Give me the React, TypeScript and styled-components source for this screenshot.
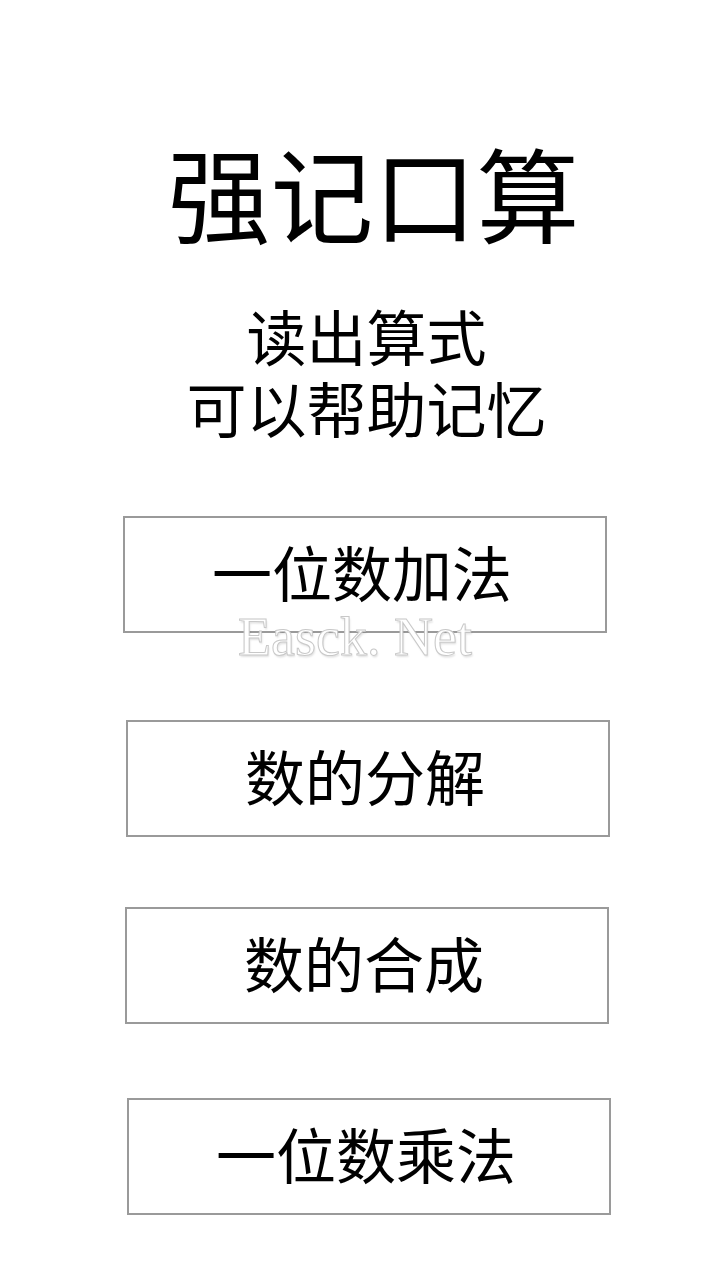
import React from "react";
import styled, { createGlobalStyle } from "styled-components";

const Global = createGlobalStyle`
  html, body {
    margin: 0;
    padding: 0;
    background: #ffffff;
  }
  body {
    font-family: "Noto Sans CJK SC", "Noto Sans", sans-serif;
    color: #000;
  }
`;

const Page = styled.main`
  position: relative;
  width: 721px;
  min-height: 1281px;
  box-sizing: border-box;
  padding: 140px 0 0 12px;
  display: flex;
  flex-direction: column;
  align-items: center;
  background: #fff;
`;

const Title = styled.h1`
  margin: 0;
  padding-left: 14px;
  font-size: 103px;
  line-height: 1;
  font-weight: 400;
  letter-spacing: 0;
  white-space: nowrap;
`;

const Subtitle = styled.div`
  margin: 56px 0 0;
  display: flex;
  flex-direction: column;
  align-items: center;
`;

const SubLine = styled.span`
  display: block;
  font-size: 60px;
  line-height: 72px;
  height: 72px;
  font-weight: 400;
  white-space: nowrap;
`;

const Menu = styled.nav`
  align-self: stretch;
  display: flex;
  flex-direction: column;
  align-items: flex-start;
  margin-top: 73px;
`;

const MenuButton = styled.button<{ $top: number; $left: number }>`
  margin: ${(p) => p.$top}px 0 0 ${(p) => p.$left}px;
  width: 484px;
  height: 117px;
  box-sizing: border-box;
  border: 2px solid #9a9a9a;
  background: #fff;
  color: #000;
  font-family: "Noto Sans CJK SC", "Noto Sans", sans-serif;
  font-size: 60px;
  line-height: 1;
  font-weight: 400;
  display: flex;
  align-items: center;
  justify-content: center;
  padding: 0 6px 8px 0;
  cursor: pointer;
`;

const Watermark = styled.div`
  position: absolute;
  left: 238px;
  top: 610px;
  font-family: "Liberation Serif", "Times New Roman", serif;
  font-size: 54px;
  line-height: 1;
  color: #ffffff;
  -webkit-text-stroke: 1px #c8c8c8;
  text-shadow: 1px 2px 2px rgba(0, 0, 0, 0.12);
  white-space: pre;
  pointer-events: none;
`;

const items = [
  { label: "一位数加法", top: 0, left: 111 },
  { label: "数的分解", top: 87, left: 114 },
  { label: "数的合成", top: 70, left: 113 },
  { label: "一位数乘法", top: 74, left: 115 },
];

export default function App() {
  return (
    <>
      <Global />
      <Page>
        <Title>强记口算</Title>
        <Subtitle>
          <SubLine>读出算式</SubLine>
          <SubLine>可以帮助记忆</SubLine>
        </Subtitle>
        <Menu>
          {items.map((it) => (
            <MenuButton key={it.label} $top={it.top} $left={it.left}>
              {it.label}
            </MenuButton>
          ))}
        </Menu>
        <Watermark>Easck. Net</Watermark>
      </Page>
    </>
  );
}
